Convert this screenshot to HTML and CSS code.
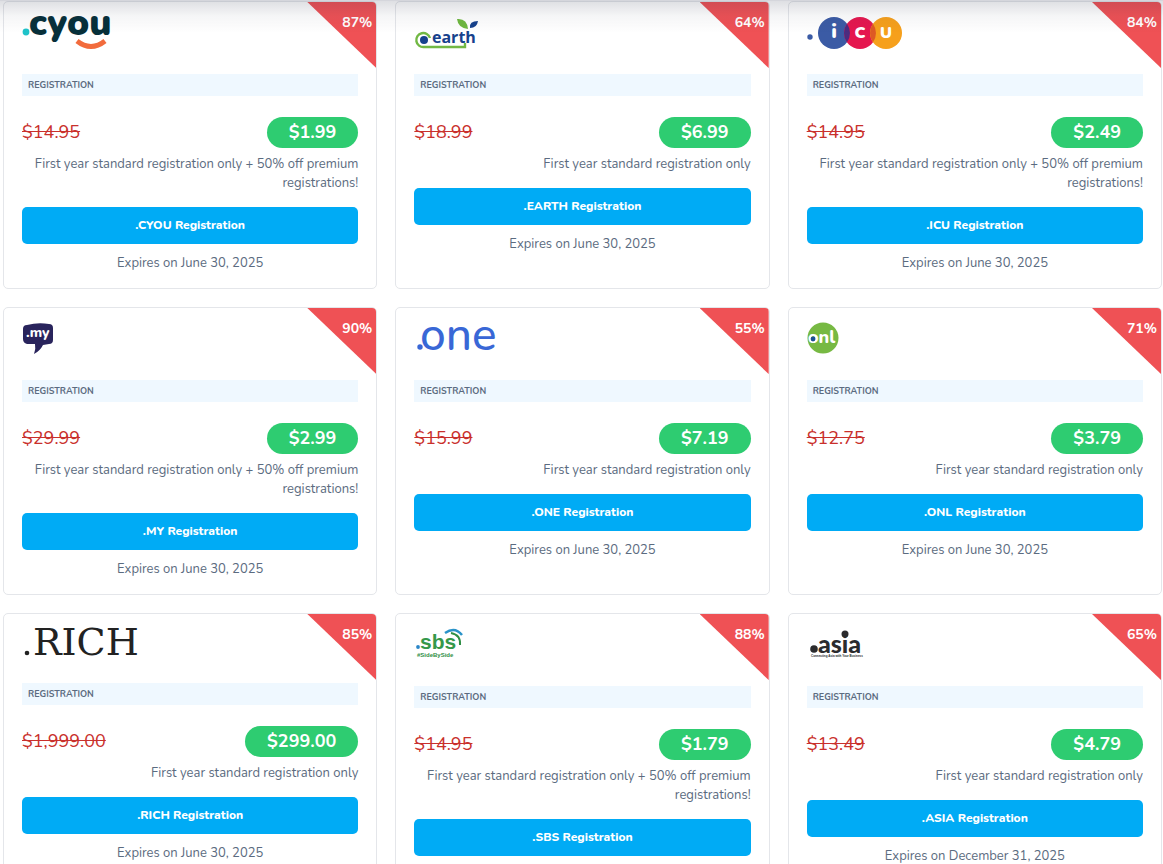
FILE: index.html
```html
<!DOCTYPE html>
<html lang="en">
<head>
  <meta charset="UTF-8" />
  <meta name="viewport" content="width=device-width, initial-scale=1.0" />
  <title>Domain Promotions</title>
  <link rel="stylesheet" href="styles.css">
</head>
<body>
  <main class="promos">
    <article class="card">
      <span class="badge">87%</span>
      <div class="logo">
        <svg width="92" height="36" role="img" aria-label=".cyou">
          <circle cx="4" cy="16" r="3.4" fill="#1fc3c9"/>
          <text x="7" y="19" class="logo-cyou">cyou</text>
          <path d="M55 25 Q69 36 83 25" fill="none" stroke="#f26b3c" stroke-width="5"/>
        </svg>
      </div>
      <h2 class="label">Registration</h2>
      <div class="prices"><del class="old">$14.95</del><strong class="new">$1.99</strong></div>
      <p class="note">First year standard registration only + 50% off premium registrations!</p>
      <a class="btn" href="#">.CYOU Registration</a>
      <p class="expires">Expires on June 30, 2025</p>
    </article>

    <article class="card">
      <span class="badge">64%</span>
      <div class="logo">
        <svg width="70" height="36" role="img" aria-label=".earth">
          <path d="M16 22 A7 7 0 1 0 10 31 H51 V27" fill="none" stroke="#72b844" stroke-width="2.4"/>
          <circle cx="10" cy="24" r="4" fill="#16418c"/>
          <text x="18" y="27" class="logo-earth">earth</text>
          <path d="M43 3 Q53 2 54 13 Q44 12 43 3Z" fill="#6fb83f"/>
          <path d="M56 12 Q55 5 64 5 Q63 12 56 12Z" fill="#16418c"/>
        </svg>
      </div>
      <h2 class="label">Registration</h2>
      <div class="prices"><del class="old">$18.99</del><strong class="new">$6.99</strong></div>
      <p class="note">First year standard registration only</p>
      <a class="btn" href="#">.EARTH Registration</a>
      <p class="expires">Expires on June 30, 2025</p>
    </article>

    <article class="card">
      <span class="badge">84%</span>
      <div class="logo">
        <svg width="98" height="36" role="img" aria-label=".icu">
          <circle cx="3" cy="21" r="2.7" fill="#3b5ba5"/>
          <circle cx="27" cy="17" r="16" fill="#3b5ba5"/>
          <circle cx="53" cy="17" r="16" fill="#e5174f"/>
          <circle cx="79" cy="17" r="16" fill="#f6a01c"/>
          <path d="M40 7.7 A16 16 0 0 1 40 26.3 A16 16 0 0 1 40 7.7Z" fill="#4c2c7f"/>
          <path d="M66 7.7 A16 16 0 0 1 66 26.3 A16 16 0 0 1 66 7.7Z" fill="#de5a24"/>
          <g class="logo-icu">
            <text x="27" y="22" class="icu-i">i</text>
            <text x="53" y="22">C</text>
            <text x="79" y="22">U</text>
          </g>
        </svg>
      </div>
      <h2 class="label">Registration</h2>
      <div class="prices"><del class="old">$14.95</del><strong class="new">$2.49</strong></div>
      <p class="note">First year standard registration only + 50% off premium registrations!</p>
      <a class="btn" href="#">.ICU Registration</a>
      <p class="expires">Expires on June 30, 2025</p>
    </article>

    <article class="card">
      <span class="badge">90%</span>
      <div class="logo">
        <svg width="34" height="36" role="img" aria-label=".my">
          <path d="M5 3 Q16 0 27 2 Q31 2 31 6 V18 Q31 22 27 22 L21 23 Q18 29 12 32 Q14 27 13 22 L5 22 Q1 21 1 17 V7 Q1 3 5 3Z" fill="#29245c"/>
          <text x="4" y="15" class="logo-my">.my</text>
        </svg>
      </div>
      <h2 class="label">Registration</h2>
      <div class="prices"><del class="old">$29.99</del><strong class="new">$2.99</strong></div>
      <p class="note">First year standard registration only + 50% off premium registrations!</p>
      <a class="btn" href="#">.MY Registration</a>
      <p class="expires">Expires on June 30, 2025</p>
    </article>

    <article class="card">
      <span class="badge">55%</span>
      <div class="logo">
        <svg width="90" height="36" role="img" aria-label=".one">
          <circle cx="6" cy="25" r="2.7" fill="#3967d6"/>
          <text x="6" y="28" class="logo-one">one</text>
        </svg>
      </div>
      <h2 class="label">Registration</h2>
      <div class="prices"><del class="old">$15.99</del><strong class="new">$7.19</strong></div>
      <p class="note">First year standard registration only</p>
      <a class="btn" href="#">.ONE Registration</a>
      <p class="expires">Expires on June 30, 2025</p>
    </article>

    <article class="card">
      <span class="badge">71%</span>
      <div class="logo">
        <svg width="34" height="36" role="img" aria-label=".onl">
          <circle cx="16" cy="16" r="15.5" fill="#77b943"/>
          <text x="1" y="21" class="logo-onl">onl</text>
          <circle cx="6" cy="17" r="2.4" fill="#1c4f94"/>
        </svg>
      </div>
      <h2 class="label">Registration</h2>
      <div class="prices"><del class="old">$12.75</del><strong class="new">$3.79</strong></div>
      <p class="note">First year standard registration only</p>
      <a class="btn" href="#">.ONL Registration</a>
      <p class="expires">Expires on June 30, 2025</p>
    </article>

    <article class="card">
      <span class="badge">85%</span>
      <div class="logo logo-short">
        <svg width="140" height="33" role="img" aria-label=".rich">
          <circle cx="5" cy="25" r="2.3" fill="#222"/>
          <text x="11" y="27" class="logo-rich">RICH</text>
        </svg>
      </div>
      <h2 class="label">Registration</h2>
      <div class="prices"><del class="old">$1,999.00</del><strong class="new">$299.00</strong></div>
      <p class="note">First year standard registration only</p>
      <a class="btn" href="#">.RICH Registration</a>
      <p class="expires">Expires on June 30, 2025</p>
    </article>

    <article class="card">
      <span class="badge">88%</span>
      <div class="logo">
        <svg width="56" height="36" role="img" aria-label=".sbs #SideBySide">
          <circle cx="4" cy="19" r="1.9" fill="#2a86c8"/>
          <text x="6" y="21" class="logo-sbs">sbs</text>
          <path d="M31 5 Q41 -2 48 7" fill="none" stroke="#2a93c9" stroke-width="2.5"/>
          <path d="M37 5 Q47 7 46 17" fill="none" stroke="#2f8f46" stroke-width="2"/>
          <text x="3" y="29" class="logo-tag sbs-tag">#SideBySide</text>
        </svg>
      </div>
      <h2 class="label">Registration</h2>
      <div class="prices"><del class="old">$14.95</del><strong class="new">$1.79</strong></div>
      <p class="note">First year standard registration only + 50% off premium registrations!</p>
      <a class="btn" href="#">.SBS Registration</a>
      <p class="expires">Expires on June 30, 2025</p>
    </article>

    <article class="card">
      <span class="badge">65%</span>
      <div class="logo">
        <svg width="60" height="36" role="img" aria-label=".asia">
          <circle cx="7" cy="21" r="3.8" fill="#2b2b2d"/>
          <text x="11" y="25" class="logo-asia">asia</text>
          <circle cx="38" cy="6" r="3.5" fill="#2b2b2d"/>
          <text x="4" y="29" class="logo-tag asia-tag">Connecting Asia with Your Business</text>
        </svg>
      </div>
      <h2 class="label">Registration</h2>
      <div class="prices"><del class="old">$13.49</del><strong class="new">$4.79</strong></div>
      <p class="note">First year standard registration only</p>
      <a class="btn" href="#">.ASIA Registration</a>
      <p class="expires">Expires on December 31, 2025</p>
    </article>
  </main>
</body>
</html>
```
FILE: styles.css
```css
:root {
  --blue: #00abf5;
  --green: #2ecc71;
  --red: #ef5155;
  --text: #5b6b80;
  --border: #e4e6ea;
}
* { box-sizing: border-box; margin: 0; padding: 0; }
body {
  font-family: Nunito, "Open Sans", sans-serif;
  font-size: 13px;
  line-height: 19px;
  color: var(--text);
  background: #fff;
}
/* shadow under the sticky site header */
body::before {
  content: "";
  position: fixed;
  top: 0;
  left: 0;
  right: 0;
  height: 32px;
  border-top: 1px solid #d5d6dc;
  background: linear-gradient(rgba(50, 55, 80, 0.16), rgba(50, 55, 80, 0.05) 45%, rgba(50, 55, 80, 0));
  pointer-events: none;
  z-index: 10;
}
.promos {
  display: grid;
  grid-template-columns: repeat(3, 1fr);
  gap: 18px;
  padding: 1px 1px 18px 3px;
}
.card {
  position: relative;
  display: flex;
  flex-direction: column;
  padding: 14px 18px 15px;
  background: #fff;
  border: 1px solid var(--border);
  border-radius: 5px;
  overflow: hidden;
}
.badge {
  position: absolute;
  top: 0;
  right: 0;
  width: 69px;
  height: 66px;
  padding: 11px 4px;
  background: var(--red);
  clip-path: polygon(0 0, 100% 0, 100% 100%);
  color: #fff;
  font-size: 14px;
  font-weight: 700;
  text-align: right;
}
.logo {
  height: 36px;
  margin-bottom: 22px;
}
.logo-short {
  height: 33px;
}
.logo svg {
  display: block;
  overflow: visible;
}
.label {
  height: 22px;
  padding-left: 6px;
  background: #eff8ff;
  font-size: 9px;
  font-weight: 700;
  line-height: 22px;
  text-transform: uppercase;
}
.prices {
  display: flex;
  justify-content: space-between;
  align-items: center;
  margin: 21px 0 7px;
}
.old {
  color: #c9302c;
  font-size: 18px;
}
.new {
  padding: 0 22px;
  border-radius: 16px;
  background: var(--green);
  color: #fff;
  font-size: 18px;
  font-weight: 700;
  line-height: 31px;
}
.note {
  text-align: right;
}
.btn {
  margin: 14px 0 10px;
  border-radius: 5px;
  background: var(--blue);
  color: #fff;
  font-size: 12px;
  font-weight: 800;
  line-height: 37px;
  text-align: center;
  text-decoration: none;
}
.btn:hover {
  background: #0098da;
}
.expires {
  text-align: center;
}

/* logos */
.logo-cyou { font: 900 37px Nunito, Inter, sans-serif; fill: #07303a; }
.logo-earth { font: 700 16px "Open Sans", sans-serif; fill: #16418c; }
.logo-icu { font: 900 16px Nunito, Lato, sans-serif; fill: #fff; text-anchor: middle; }
.icu-i { font-size: 20px; }
.logo-my { font: 800 14px Nunito, "Open Sans", sans-serif; fill: #fff; }
.logo-one { font: 500 46px Nunito, Lato, sans-serif; fill: #3967d6; }
.logo-onl { font: 800 18px Nunito, "Open Sans", sans-serif; fill: #fff; }
.logo-rich { font: 400 38px "DejaVu Serif", serif; fill: #222; }
.logo-sbs { font: 700 21px "Liberation Sans", sans-serif; fill: #35984a; }
.logo-asia { font: 900 25px Lato, sans-serif; fill: #2b2b2d; }
.logo-tag { font: 700 6px "Liberation Sans", sans-serif; }
.sbs-tag { fill: #2f8f46; }
.asia-tag { font-size: 3px; fill: #2b2b2d; }
```
